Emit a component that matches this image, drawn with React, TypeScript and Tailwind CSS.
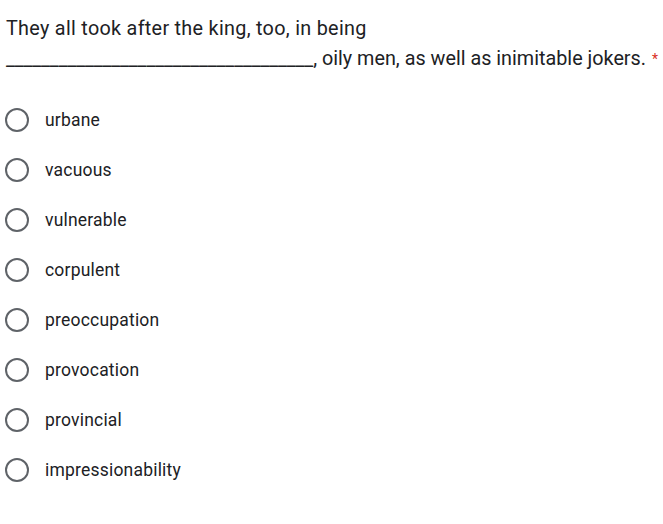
import React from 'react';

const options = [
  'urbane',
  'vacuous',
  'vulnerable',
  'corpulent',
  'preoccupation',
  'provocation',
  'provincial',
  'impressionability',
];

const App: React.FC = () => {
  return (
    <div className="w-[663px] h-[524px] bg-white overflow-hidden font-['Roboto',sans-serif] text-[#202124]">
      {/* Question title */}
      <div className="pl-[6px] pt-[14px] text-[19.8px] leading-[30px] whitespace-nowrap">
        <div className="tracking-[0.3px]">They all took after the king, too, in being</div>
        <div>
          <span className="tracking-[-0.15px]">{'_'.repeat(35)}</span>, oily men, as well as inimitable jokers.
          <span className="text-[#d93025] text-[14px] align-top ml-[6px]">*</span>
        </div>
      </div>

      {/* Options */}
      <div className="mt-[34px] flex flex-col gap-[26px]">
        {options.map((opt) => (
          <label key={opt} className="flex items-center h-[24px] pl-[5px] cursor-pointer">
            <span className="w-[24px] h-[24px] rounded-full border-2 border-[#5f6368] shrink-0" />
            <span className="ml-[16px] text-[17.5px] tracking-[0.2px]">{opt}</span>
          </label>
        ))}
      </div>
    </div>
  );
};

export default App;
